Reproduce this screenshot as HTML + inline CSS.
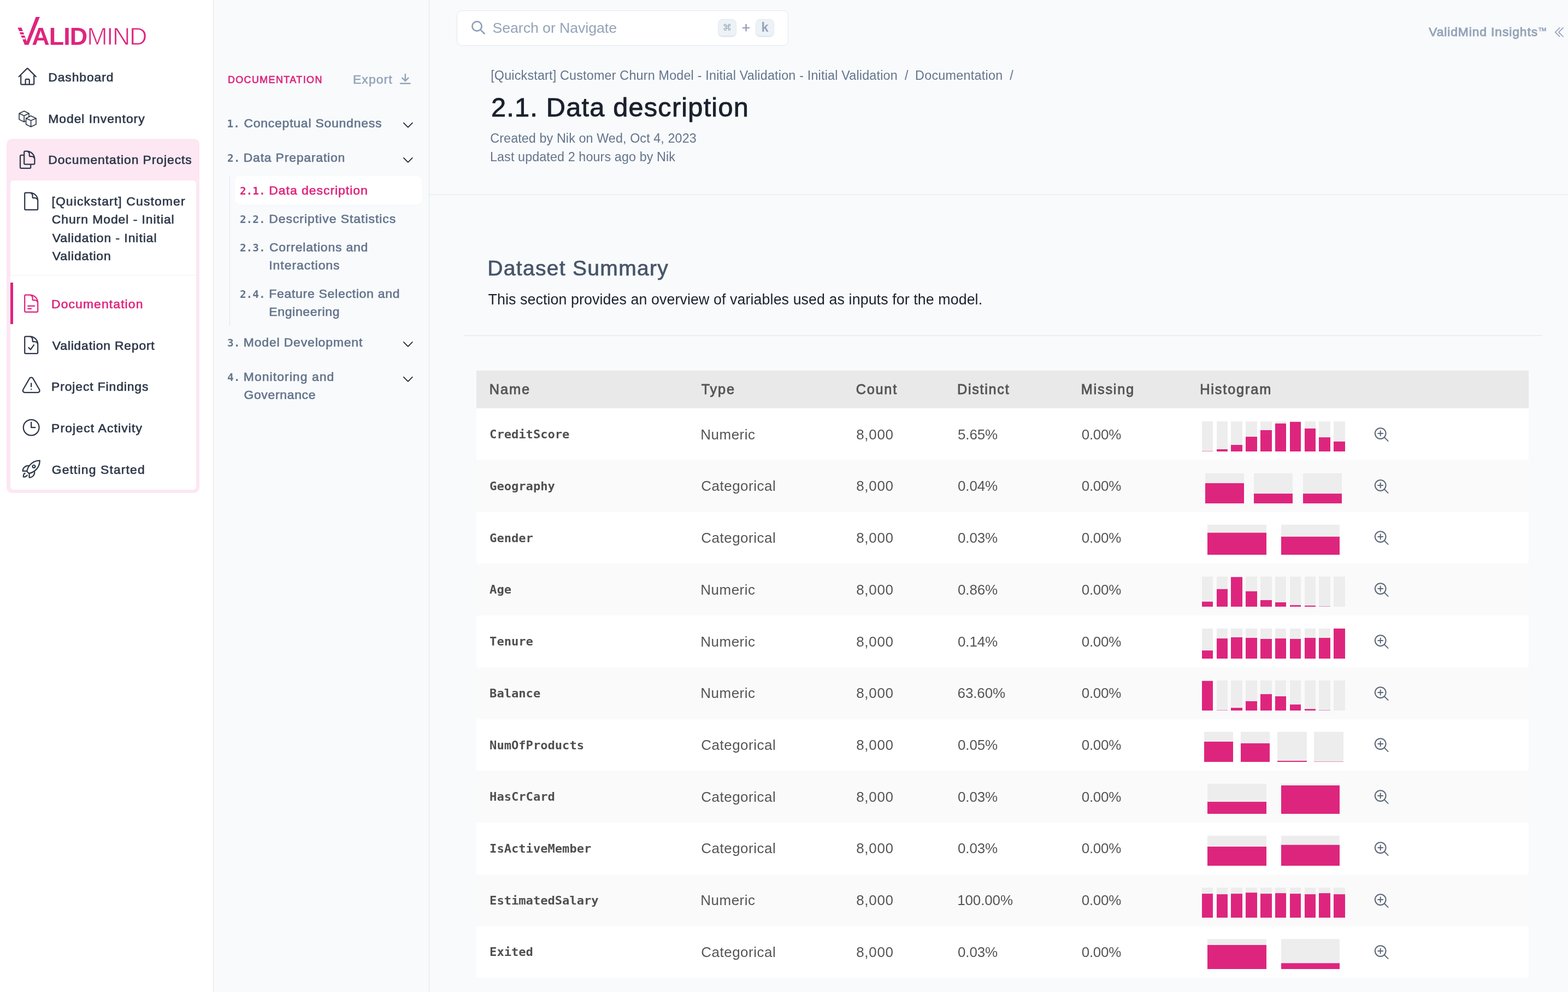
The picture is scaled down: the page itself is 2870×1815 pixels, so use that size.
<!DOCTYPE html>
<html lang="en">
<head>
<meta charset="utf-8">
<title>2.1. Data description - ValidMind</title>
<meta name="viewport" content="width=2870">
<style>
*{box-sizing:border-box;margin:0;padding:0}
html,body{width:2870px;height:1815px;overflow:hidden}
body{position:relative;background:#f8fafc;font-family:"Liberation Sans",sans-serif;color:#2d3748}
ul,ol{list-style:none}
a{color:inherit;text-decoration:none}
h1,h2,p,th,td,code{font-weight:400;font-size:inherit}
.t{position:absolute;white-space:nowrap;display:block}
.ic,.hist{position:absolute;display:block;overflow:visible}
.side1{position:absolute;left:0;top:0;width:391px;height:1815px;background:#fff;border-right:1px solid #e2e8f0}
.side2{position:absolute;left:391px;top:0;width:395px;height:1815px;border-right:1px solid #e2e8f0}
.main{position:absolute;left:786px;top:0;width:2084px;height:1815px}
.side1,.side2,.main{will-change:transform}
.tbl,.tbl thead,.tbl tbody,.tbl th,.tbl td{display:block;position:static}
.pinkbox{position:absolute;left:12px;top:254px;width:353px;height:648px;border-radius:10px;background:#fce7f2}
.card{position:absolute;left:19px;top:329.7px;width:340px;height:566.4px;border-radius:6px;background:#fff}
.cardsep{position:absolute;left:19px;top:503px;width:340px;height:1px;background:#edf2f7}
.bar{position:absolute;left:19px;top:517px;width:5px;height:76px;background:#de257e}
.lv{position:absolute;left:24.3px;top:16.6px;font-size:73.4px;line-height:80px;color:#de257e;clip-path:polygon(0 42.5%,55% 42.5%,55% 0,100% 0,100% 100%,0 100%)}
.ls{position:absolute;left:28px;width:18px;height:2.2px;background:#fff}
.s1{top:56.6px}.s2{top:63px}.s3{top:69.4px}
.rail{position:absolute;top:322px;width:1px;height:274px;background:#dfe5ee}
.act{position:absolute;top:322px;width:342px;height:52px;border-radius:10px;background:#fff}
.search{position:absolute;width:607px;height:65px;border:1px solid #e2e8f0;border-radius:10px;background:#fff}
.kbd{position:absolute;width:34px;height:33px;border-radius:8.5px;background:#edf2f7;border:1px solid #e2e8f0;border-bottom-width:3px;display:flex;align-items:center;justify-content:center;font-family:inherit;color:#94a3b8;line-height:1}
.hr1{position:absolute;left:0;top:355px;width:2084px;height:2px;background:#ecf0f6}
.hr2{position:absolute;top:613px;width:1974px;height:2px;background:#eaedf5}
.tbl tr{position:absolute;display:block;width:1926px;height:95px}
.tbl thead tr{height:69px;background:#e9e9e9}
.tbl tr.odd{background:#fff}
.tbl tr.even{background:#fafafa}
@media (min-resolution:1.5dppx) and (max-width:1500px){html{zoom:.5}}
</style>
</head>
<body>
<nav class="side1" aria-label="Primary">
<a class="logo" aria-label="ValidMind">
<span class="lv">V</span><i class="ls s1"></i><i class="ls s2"></i><i class="ls s3"></i>
<span class="t lg" style="left:58.20px;top:39.00px;font-size:44.9px;line-height:55px;letter-spacing:-0.898px;font-weight:700;color:#de257e;">ALID</span>
<span class="t lg" style="left:159.19px;top:39.00px;font-size:44.9px;line-height:55px;letter-spacing:-1.521px;color:#de257e;-webkit-text-stroke:0.9px #fff;">MIND</span>
</a>
<ul class="nl">
<li><a class="ni"><svg class="ic" style="left:30.80px;top:120.70px;width:38.4px;height:38.4px" viewBox="0 0 24 24" fill="none" stroke="#2d3748" stroke-width="1.4" stroke-linecap="round" stroke-linejoin="round" aria-hidden="true"><path d="m2.25 12 8.954-8.955c.44-.439 1.152-.439 1.591 0L21.75 12M4.5 9.75v10.125c0 .621.504 1.125 1.125 1.125H9.75v-4.875c0-.621.504-1.125 1.125-1.125h2.25c.621 0 1.125.504 1.125 1.125V21h4.125c.621 0 1.125-.504 1.125-1.125V9.75M8.25 21h8.25"/></svg><span class="t" style="left:88.24px;top:126.00px;font-size:22.9px;line-height:30px;letter-spacing:0.900px;color:#2d3748;-webkit-text-stroke:0.65px currentColor;">Dashboard</span></a></li>
<li><a class="ni"><svg class="ic" style="left:25px;top:190px;width:60px;height:55px" viewBox="0 0 60 55" fill="none" stroke="#2d3748" stroke-width="1.65" stroke-linecap="round" stroke-linejoin="round" aria-hidden="true"><path d="M19.15 13.2 10.05 17.5v11.05l9.1 4.35 2.9-1.4M19.15 13.2 28 17.5v6M10.05 17.5l9.1 4.2L28 17.5M19.15 21.7v11.2"/><path d="M31.6 22.05 22.6 26.55v11l9 4.35 9.4-4.35v-11l-9.4-4.5ZM22.6 26.55l9 4 9.4-4M31.6 30.55V41.9"/></svg><span class="t" style="left:88.24px;top:202.00px;font-size:22.9px;line-height:30px;letter-spacing:0.965px;color:#2d3748;-webkit-text-stroke:0.65px currentColor;">Model Inventory</span></a></li>
<li class="grp"><div class="pinkbox"></div><a class="ni"><svg class="ic" style="left:31.20px;top:272.60px;width:38.4px;height:38.4px" viewBox="0 0 24 24" fill="none" stroke="#2d3748" stroke-width="1.4" stroke-linecap="round" stroke-linejoin="round" aria-hidden="true"><path d="M15.75 17.25v3.375c0 .621-.504 1.125-1.125 1.125h-9.75a1.125 1.125 0 0 1-1.125-1.125V7.875c0-.621.504-1.125 1.125-1.125H6.75a9.06 9.06 0 0 1 1.5.124m7.5 10.376h3.375c.621 0 1.125-.504 1.125-1.125V11.25c0-4.46-3.243-8.161-7.5-8.876a9.06 9.06 0 0 0-1.5-.124H9.375c-.621 0-1.125.504-1.125 1.125v3.5m7.5 10.375H9.375a1.125 1.125 0 0 1-1.125-1.125v-9.25m12 6.625v-1.875a3.375 3.375 0 0 0-3.375-3.375h-1.5a1.125 1.125 0 0 1-1.125-1.125v-1.5a3.375 3.375 0 0 0-3.375-3.375H9.75"/></svg><span class="t" style="left:88.24px;top:277.00px;font-size:22.9px;line-height:30px;letter-spacing:0.931px;color:#2d3748;-webkit-text-stroke:0.65px currentColor;">Documentation Projects</span></a>
<div class="card"></div><div class="cardsep"></div><div class="bar"></div>
<ul class="sub">
<li><a class="ni"><svg class="ic" style="left:38.00px;top:348.90px;width:38.4px;height:38.4px" viewBox="0 0 24 24" fill="none" stroke="#2d3748" stroke-width="1.4" stroke-linecap="round" stroke-linejoin="round" aria-hidden="true"><path d="M19.5 14.25v-2.625a3.375 3.375 0 0 0-3.375-3.375h-1.5A1.125 1.125 0 0 1 13.5 7.125v-1.5a3.375 3.375 0 0 0-3.375-3.375H8.25m2.25 0H5.625c-.621 0-1.125.504-1.125 1.125v17.25c0 .621.504 1.125 1.125 1.125h12.75c.621 0 1.125-.504 1.125-1.125V11.25a9 9 0 0 0-9-9Z"/></svg>
<span class="t" style="left:94.39px;top:353.00px;font-size:22.9px;line-height:30px;letter-spacing:1.144px;color:#2d3748;-webkit-text-stroke:0.65px currentColor;">[Quickstart] Customer</span>
<span class="t" style="left:94.75px;top:386.00px;font-size:22.9px;line-height:30px;letter-spacing:0.956px;color:#2d3748;-webkit-text-stroke:0.65px currentColor;">Churn Model - Initial</span>
<span class="t" style="left:95.83px;top:420.00px;font-size:22.9px;line-height:30px;letter-spacing:0.951px;color:#2d3748;-webkit-text-stroke:0.65px currentColor;">Validation - Initial</span>
<span class="t" style="left:95.83px;top:453.00px;font-size:22.9px;line-height:30px;letter-spacing:0.895px;color:#2d3748;-webkit-text-stroke:0.65px currentColor;">Validation</span>
</a></li>
<li><a class="ni on"><svg class="ic" style="left:38.00px;top:535.90px;width:38.4px;height:38.4px" viewBox="0 0 24 24" fill="none" stroke="#de257e" stroke-width="1.4" stroke-linecap="round" stroke-linejoin="round" aria-hidden="true"><path d="M19.5 14.25v-2.625a3.375 3.375 0 0 0-3.375-3.375h-1.5A1.125 1.125 0 0 1 13.5 7.125v-1.5a3.375 3.375 0 0 0-3.375-3.375H8.25m0 12.75h7.5m-7.5 3H12M10.5 2.25H5.625c-.621 0-1.125.504-1.125 1.125v17.25c0 .621.504 1.125 1.125 1.125h12.75c.621 0 1.125-.504 1.125-1.125V11.25a9 9 0 0 0-9-9Z"/></svg><span class="t" style="left:94.04px;top:541.00px;font-size:22.9px;line-height:30px;letter-spacing:1.116px;color:#de257e;-webkit-text-stroke:0.65px currentColor;">Documentation</span></a></li>
<li><a class="ni"><svg class="ic" style="left:38.00px;top:611.50px;width:38.4px;height:38.4px" viewBox="0 0 24 24" fill="none" stroke="#2d3748" stroke-width="1.4" stroke-linecap="round" stroke-linejoin="round" aria-hidden="true"><path d="M10.125 2.25h-4.5c-.621 0-1.125.504-1.125 1.125v17.25c0 .621.504 1.125 1.125 1.125h12.75c.621 0 1.125-.504 1.125-1.125v-9M10.125 2.25h.375a9 9 0 0 1 9 9v.375M10.125 2.25A3.375 3.375 0 0 1 13.5 5.625v1.5c0 .621.504 1.125 1.125 1.125h1.5a3.375 3.375 0 0 1 3.375 3.375M9 15l2.25 2.25L15 12"/></svg><span class="t" style="left:95.83px;top:617.00px;font-size:22.9px;line-height:30px;letter-spacing:0.812px;color:#2d3748;-webkit-text-stroke:0.65px currentColor;">Validation Report</span></a></li>
<li><a class="ni"><svg class="ic" style="left:38.00px;top:687.20px;width:38.4px;height:38.4px" viewBox="0 0 24 24" fill="none" stroke="#2d3748" stroke-width="1.4" stroke-linecap="round" stroke-linejoin="round" aria-hidden="true"><path d="M12 9v3.75m-9.303 3.376c-.866 1.5.217 3.374 1.948 3.374h14.71c1.73 0 2.813-1.874 1.948-3.374L13.949 3.378c-.866-1.5-3.032-1.5-3.898 0L2.697 16.126ZM12 15.75h.007v.008H12v-.008Z"/></svg><span class="t" style="left:94.04px;top:692.00px;font-size:22.9px;line-height:30px;letter-spacing:0.884px;color:#2d3748;-webkit-text-stroke:0.65px currentColor;">Project Findings</span></a></li>
<li><a class="ni"><svg class="ic" style="left:38.00px;top:763.10px;width:38.4px;height:38.4px" viewBox="0 0 24 24" fill="none" stroke="#2d3748" stroke-width="1.4" stroke-linecap="round" stroke-linejoin="round" aria-hidden="true"><path d="M12 6v6h4.5m4.5 0a9 9 0 1 1-18 0 9 9 0 0 1 18 0Z"/></svg><span class="t" style="left:94.04px;top:768.00px;font-size:22.9px;line-height:30px;letter-spacing:1.139px;color:#2d3748;-webkit-text-stroke:0.65px currentColor;">Project Activity</span></a></li>
<li><a class="ni"><svg class="ic" style="left:38.00px;top:839.00px;width:38.4px;height:38.4px" viewBox="0 0 24 24" fill="none" stroke="#2d3748" stroke-width="1.4" stroke-linecap="round" stroke-linejoin="round" aria-hidden="true"><path d="M15.59 14.37a6 6 0 0 1-5.84 7.38v-4.8m5.84-2.58a14.98 14.98 0 0 0 6.16-12.12A14.98 14.98 0 0 0 9.631 8.41m5.96 5.96a14.926 14.926 0 0 1-5.841 2.58m-.119-8.54a6 6 0 0 0-7.381 5.84h4.8m2.581-5.84a14.927 14.927 0 0 0-2.58 5.84m2.699 2.7c-.103.021-.207.041-.311.06a15.09 15.09 0 0 1-2.448-2.448 14.9 14.9 0 0 1 .06-.312m-2.24 2.39a4.493 4.493 0 0 0-1.757 4.306 4.493 4.493 0 0 0 4.306-1.758M16.5 9a1.5 1.5 0 1 1-3 0 1.5 1.5 0 0 1 3 0Z"/></svg><span class="t" style="left:94.75px;top:844.00px;font-size:22.9px;line-height:30px;letter-spacing:1.142px;color:#2d3748;-webkit-text-stroke:0.65px currentColor;">Getting Started</span></a></li>
</ul></li></ul>
</nav>
<aside class="side2" aria-label="Documentation outline">
<h2 class="t" style="left:25.95px;top:134.00px;font-size:17.9px;line-height:24px;letter-spacing:1.417px;color:#de257e;-webkit-text-stroke:0.7px currentColor;">DOCUMENTATION</h2>
<a class="exp"><span class="t" style="left:255.01px;top:130.00px;font-size:22.9px;line-height:30px;letter-spacing:1.085px;color:#94a3b8;-webkit-text-stroke:0.6px currentColor;">Export</span><svg class="ic" style="left:338.20px;top:132.40px;width:25.6px;height:25.6px" viewBox="0 0 24 24" fill="none" stroke="#94a3b8" stroke-width="2.3" stroke-linecap="round" stroke-linejoin="round" aria-hidden="true"><path d="M12 3.6v11.5m-5.2-5.2 5.2 5.2 5.2-5.2M3.8 19.5h16.4"/></svg></a>
<ol class="toc">
<li><span class="t" style="left:24.48px;top:213.00px;font-size:19.4px;line-height:27px;font-weight:700;font-family:'DejaVu Sans Mono', 'Liberation Mono', monospace;color:#64748b;">1.</span><span class="t" style="left:55.45px;top:210.00px;font-size:22.9px;line-height:30px;letter-spacing:0.802px;color:#64748b;-webkit-text-stroke:0.65px currentColor;">Conceptual Soundness</span><svg class="ic" style="left:343.00px;top:215.80px;width:25.6px;height:25.6px" viewBox="0 0 24 24" fill="none" stroke="#1a202c" stroke-width="1.6" stroke-linecap="round" stroke-linejoin="round" aria-hidden="true"><path d="m19.5 8.25-7.5 7.5-7.5-7.5"/></svg></li>
<li><span class="t" style="left:25.09px;top:276.00px;font-size:19.4px;line-height:27px;font-weight:700;font-family:'DejaVu Sans Mono', 'Liberation Mono', monospace;color:#64748b;">2.</span><span class="t" style="left:54.74px;top:273.00px;font-size:22.9px;line-height:30px;letter-spacing:0.833px;color:#64748b;-webkit-text-stroke:0.65px currentColor;">Data Preparation</span><svg class="ic" style="left:343.00px;top:280.00px;width:25.6px;height:25.6px" viewBox="0 0 24 24" fill="none" stroke="#1a202c" stroke-width="1.6" stroke-linecap="round" stroke-linejoin="round" aria-hidden="true"><path d="m19.5 8.25-7.5 7.5-7.5-7.5"/></svg>
<div class="rail" style="left:29.0px"></div><div class="act" style="left:39.0px"></div><ol>
<li><span class="t" style="left:47.89px;top:336.00px;font-size:19.4px;line-height:27px;font-weight:700;font-family:'DejaVu Sans Mono', 'Liberation Mono', monospace;color:#de257e;">2.1.</span><span class="t" style="left:101.24px;top:333.00px;font-size:22.9px;line-height:30px;letter-spacing:1.010px;color:#de257e;-webkit-text-stroke:0.65px currentColor;">Data description</span></li>
<li><span class="t" style="left:47.89px;top:388.00px;font-size:19.4px;line-height:27px;font-weight:700;font-family:'DejaVu Sans Mono', 'Liberation Mono', monospace;color:#64748b;">2.2.</span><span class="t" style="left:101.24px;top:385.00px;font-size:22.9px;line-height:30px;letter-spacing:0.991px;color:#64748b;-webkit-text-stroke:0.65px currentColor;">Descriptive Statistics</span></li>
<li><span class="t" style="left:47.89px;top:440.00px;font-size:19.4px;line-height:27px;font-weight:700;font-family:'DejaVu Sans Mono', 'Liberation Mono', monospace;color:#64748b;">2.3.</span><span class="t" style="left:101.95px;top:437.00px;font-size:22.9px;line-height:30px;letter-spacing:0.826px;color:#64748b;-webkit-text-stroke:0.65px currentColor;">Correlations and</span><span class="t" style="left:101.24px;top:470.00px;font-size:22.9px;line-height:30px;letter-spacing:0.998px;color:#64748b;-webkit-text-stroke:0.65px currentColor;">Interactions</span></li>
<li><span class="t" style="left:47.89px;top:525.00px;font-size:19.4px;line-height:27px;font-weight:700;font-family:'DejaVu Sans Mono', 'Liberation Mono', monospace;color:#64748b;">2.4.</span><span class="t" style="left:101.24px;top:522.00px;font-size:22.9px;line-height:30px;letter-spacing:0.758px;color:#64748b;-webkit-text-stroke:0.65px currentColor;">Feature Selection and</span><span class="t" style="left:101.24px;top:555.00px;font-size:22.9px;line-height:30px;letter-spacing:0.710px;color:#64748b;-webkit-text-stroke:0.65px currentColor;">Engineering</span></li>
</ol></li>
<li><span class="t" style="left:25.09px;top:614.00px;font-size:19.4px;line-height:27px;font-weight:700;font-family:'DejaVu Sans Mono', 'Liberation Mono', monospace;color:#64748b;">3.</span><span class="t" style="left:54.74px;top:611.00px;font-size:22.9px;line-height:30px;letter-spacing:0.875px;color:#64748b;-webkit-text-stroke:0.65px currentColor;">Model Development</span><svg class="ic" style="left:343.00px;top:616.90px;width:25.6px;height:25.6px" viewBox="0 0 24 24" fill="none" stroke="#1a202c" stroke-width="1.6" stroke-linecap="round" stroke-linejoin="round" aria-hidden="true"><path d="m19.5 8.25-7.5 7.5-7.5-7.5"/></svg></li>
<li><span class="t" style="left:25.09px;top:677.00px;font-size:19.4px;line-height:27px;font-weight:700;font-family:'DejaVu Sans Mono', 'Liberation Mono', monospace;color:#64748b;">4.</span><span class="t" style="left:54.74px;top:674.00px;font-size:22.9px;line-height:30px;letter-spacing:1.087px;color:#64748b;-webkit-text-stroke:0.65px currentColor;">Monitoring and</span><span class="t" style="left:55.45px;top:707.00px;font-size:22.9px;line-height:30px;letter-spacing:0.700px;color:#64748b;-webkit-text-stroke:0.65px currentColor;">Governance</span><svg class="ic" style="left:343.00px;top:681.00px;width:25.6px;height:25.6px" viewBox="0 0 24 24" fill="none" stroke="#1a202c" stroke-width="1.6" stroke-linecap="round" stroke-linejoin="round" aria-hidden="true"><path d="m19.5 8.25-7.5 7.5-7.5-7.5"/></svg></li>
</ol>
</aside>
<main class="main">
<header class="top">
<div class="search" role="search" style="left:50.0px;top:19.0px">
<svg class="ic" style="left:23.0px;top:15.0px;width:32px;height:32px" viewBox="0 0 32 32" fill="none" stroke="#8f9fb8" stroke-width="2.7" stroke-linecap="butt" aria-hidden="true"><circle cx="13" cy="13" r="8.65"/><path d="M19.1 19.1 27.3 27.3"/></svg>
<span class="t" style="left:64.57px;top:14.00px;font-size:26.7px;line-height:34px;letter-spacing:-0.061px;color:#94a3b8;">Search or Navigate</span>
<kbd class="kbd" style="left:477.0px;top:15.0px"><span style="font-family:'DejaVu Sans', sans-serif;font-size:16.5px;position:relative;top:1px">⌘</span></kbd>
<span class="t" style="left:520.98px;top:13.00px;font-size:26px;line-height:34px;color:#94a3b8;-webkit-text-stroke:0.6px currentColor;">+</span>
<kbd class="kbd" style="left:546.0px;top:15.0px"><span style="font-weight:700;font-size:23.5px;position:relative;top:0.5px">k</span></kbd>
</div>
<div class="ins"><span class="t" style="left:1829.25px;top:43.00px;font-size:22.8px;line-height:30px;letter-spacing:0.910px;color:#94a3b8;-webkit-text-stroke:0.9px currentColor;">ValidMind Insights</span><span class="t" style="left:2028.56px;top:45.00px;font-size:16.5px;line-height:22px;color:#94a3b8;-webkit-text-stroke:0.5px currentColor;">™</span><svg class="ic" style="left:2055.20px;top:45.60px;width:25.6px;height:25.6px" viewBox="0 0 24 24" fill="none" stroke="#94a3b8" stroke-width="1.6" stroke-linecap="round" stroke-linejoin="round" aria-hidden="true"><path d="m18.75 4.5-7.5 7.5 7.5 7.5m-6-15L5.25 12l7.5 7.5"/></svg></div>
</header>
<section class="hd">
<nav class="crumbs" aria-label="Breadcrumb">
<span class="t" style="left:112.14px;top:123.00px;font-size:23.3px;line-height:30px;letter-spacing:0.205px;color:#64748b;">[Quickstart] Customer Churn Model - Initial Validation - Initial Validation</span>
<span class="t" style="left:870.10px;top:123.00px;font-size:23.3px;line-height:30px;color:#64748b;">/</span>
<span class="t" style="left:889.08px;top:123.00px;font-size:23.3px;line-height:30px;letter-spacing:0.284px;color:#64748b;">Documentation</span>
<span class="t" style="left:1062.30px;top:123.00px;font-size:23.3px;line-height:30px;color:#64748b;">/</span>
</nav>
<h1 class="t" style="left:112.97px;top:167.00px;font-size:48.7px;line-height:58px;letter-spacing:1.212px;color:#1a202c;-webkit-text-stroke:0.9px currentColor;">2.1. Data description</h1>
<p class="t" style="left:111.31px;top:238.00px;font-size:23.3px;line-height:30px;letter-spacing:0.108px;color:#64748b;">Created by Nik on Wed, Oct 4, 2023</p>
<p class="t" style="left:110.98px;top:272.00px;font-size:23.3px;line-height:30px;letter-spacing:0.119px;color:#64748b;">Last updated 2 hours ago by Nik</p>
</section>
<div class="hr1"></div>
<section class="content">
<h2 class="t" style="left:106.30px;top:467.00px;font-size:39px;line-height:47px;letter-spacing:1.311px;color:#475569;-webkit-text-stroke:0.7px currentColor;">Dataset Summary</h2>
<p class="t" style="left:107.58px;top:531.00px;font-size:26.8px;line-height:34px;letter-spacing:0.085px;color:#1a202c;">This section provides an overview of variables used as inputs for the model.</p>
<div class="hr2" style="left:62.0px"></div>
<table class="tbl"><thead><tr style="left:86.0px;top:678.0px">
<th><span class="t" style="left:23.85px;top:18.00px;font-size:25.3px;line-height:32px;letter-spacing:1.888px;color:#555;-webkit-text-stroke:0.85px currentColor;">Name</span></th>
<th><span class="t" style="left:411.63px;top:18.00px;font-size:25.3px;line-height:32px;letter-spacing:1.840px;color:#555;-webkit-text-stroke:0.85px currentColor;">Type</span></th>
<th><span class="t" style="left:694.84px;top:18.00px;font-size:25.3px;line-height:32px;letter-spacing:1.709px;color:#555;-webkit-text-stroke:0.85px currentColor;">Count</span></th>
<th><span class="t" style="left:880.05px;top:18.00px;font-size:25.3px;line-height:32px;letter-spacing:1.671px;color:#555;-webkit-text-stroke:0.85px currentColor;">Distinct</span></th>
<th><span class="t" style="left:1106.75px;top:18.00px;font-size:25.3px;line-height:32px;letter-spacing:1.782px;color:#555;-webkit-text-stroke:0.85px currentColor;">Missing</span></th>
<th><span class="t" style="left:1324.15px;top:18.00px;font-size:25.3px;line-height:32px;letter-spacing:1.857px;color:#555;-webkit-text-stroke:0.85px currentColor;">Histogram</span></th>
<th></th></tr></thead><tbody>
<tr class="odd" style="left:86.0px;top:747px;height:95px">
<td><code class="t" style="left:24.10px;top:32.00px;font-size:22.1px;line-height:30px;font-weight:700;font-family:'DejaVu Sans Mono', 'Liberation Mono', monospace;color:#4f4f4f;transform:scaleY(0.96);transform-origin:0 23.0px;">CreditScore</code></td>
<td><span class="t" style="left:410.37px;top:31.00px;font-size:26.0px;line-height:34px;letter-spacing:0.458px;color:#555;">Numeric</span></td>
<td><span class="t" style="left:695.19px;top:31.00px;font-size:26.0px;line-height:34px;letter-spacing:0.699px;color:#555;">8,000</span></td>
<td><span class="t" style="left:880.99px;top:31.00px;font-size:26.0px;line-height:34px;letter-spacing:-0.120px;color:#555;">5.65%</span></td>
<td><span class="t" style="left:1107.69px;top:31.00px;font-size:26.0px;line-height:34px;letter-spacing:-0.259px;color:#555;">0.00%</span></td>
<td><svg class="hist" style="left:1318.0px;top:24.0px" width="280" height="55" viewBox="2190 0 280 55" aria-hidden="true"><rect x="2200.0" y="0" width="20.0" height="55" fill="#ededed"/><rect x="2200.0" y="54.00" width="20.0" height="1.00" fill="#de257e" opacity="0.45"/><rect x="2227.0" y="0" width="20.0" height="55" fill="#ededed"/><rect x="2227.0" y="50.98" width="20.0" height="4.01" fill="#de257e"/><rect x="2253.0" y="0" width="21.0" height="55" fill="#ededed"/><rect x="2253.0" y="43.01" width="21.0" height="11.99" fill="#de257e"/><rect x="2280.0" y="0" width="21.0" height="55" fill="#ededed"/><rect x="2280.0" y="28.05" width="21.0" height="26.95" fill="#de257e"/><rect x="2307.0" y="0" width="21.0" height="55" fill="#ededed"/><rect x="2307.0" y="16.01" width="21.0" height="38.99" fill="#de257e"/><rect x="2334.0" y="0" width="20.0" height="55" fill="#ededed"/><rect x="2334.0" y="3.85" width="20.0" height="51.15" fill="#de257e"/><rect x="2361.0" y="0" width="20.0" height="55" fill="#ededed"/><rect x="2361.0" y="0.83" width="20.0" height="54.17" fill="#de257e"/><rect x="2388.0" y="0" width="20.0" height="55" fill="#ededed"/><rect x="2388.0" y="12.98" width="20.0" height="42.02" fill="#de257e"/><rect x="2414.0" y="0" width="21.0" height="55" fill="#ededed"/><rect x="2414.0" y="29.15" width="21.0" height="25.85" fill="#de257e"/><rect x="2441.0" y="0" width="21.0" height="55" fill="#ededed"/><rect x="2441.0" y="36.85" width="21.0" height="18.15" fill="#de257e"/></svg></td>
<td><svg class="ic" style="left:1640.0px;top:31.2px;width:32px;height:32px" viewBox="0 0 32 32" fill="none" stroke="#5d6878" stroke-width="2.05" stroke-linecap="round" aria-hidden="true"><circle cx="14.7" cy="15" r="9.85"/><path d="M21.8 22.1 28.6 28.9M10.2 15h9M14.7 10.5v9"/></svg></td>
</tr>
<tr class="even" style="left:86.0px;top:842px;height:95px">
<td><code class="t" style="left:24.10px;top:32.00px;font-size:22.1px;line-height:30px;font-weight:700;font-family:'DejaVu Sans Mono', 'Liberation Mono', monospace;color:#4f4f4f;transform:scaleY(0.96);transform-origin:0 23.0px;">Geography</code></td>
<td><span class="t" style="left:411.18px;top:30.00px;font-size:26.0px;line-height:34px;letter-spacing:0.512px;color:#555;">Categorical</span></td>
<td><span class="t" style="left:695.19px;top:30.00px;font-size:26.0px;line-height:34px;letter-spacing:0.699px;color:#555;">8,000</span></td>
<td><span class="t" style="left:880.99px;top:30.00px;font-size:26.0px;line-height:34px;letter-spacing:-0.120px;color:#555;">0.04%</span></td>
<td><span class="t" style="left:1107.69px;top:30.00px;font-size:26.0px;line-height:34px;letter-spacing:-0.259px;color:#555;">0.00%</span></td>
<td><svg class="hist" style="left:1318.0px;top:24.0px" width="280" height="55" viewBox="2190 0 280 55" aria-hidden="true"><rect x="2206.0" y="0" width="71.0" height="55" fill="#ededed"/><rect x="2206.0" y="18.04" width="71.0" height="36.96" fill="#de257e"/><rect x="2295.0" y="0" width="71.0" height="55" fill="#ededed"/><rect x="2295.0" y="37.12" width="71.0" height="17.88" fill="#de257e"/><rect x="2385.0" y="0" width="71.0" height="55" fill="#ededed"/><rect x="2385.0" y="37.12" width="71.0" height="17.88" fill="#de257e"/></svg></td>
<td><svg class="ic" style="left:1640.0px;top:31.2px;width:32px;height:32px" viewBox="0 0 32 32" fill="none" stroke="#5d6878" stroke-width="2.05" stroke-linecap="round" aria-hidden="true"><circle cx="14.7" cy="15" r="9.85"/><path d="M21.8 22.1 28.6 28.9M10.2 15h9M14.7 10.5v9"/></svg></td>
</tr>
<tr class="odd" style="left:86.0px;top:937px;height:94px">
<td><code class="t" style="left:24.10px;top:32.00px;font-size:22.1px;line-height:30px;font-weight:700;font-family:'DejaVu Sans Mono', 'Liberation Mono', monospace;color:#4f4f4f;transform:scaleY(0.96);transform-origin:0 23.0px;">Gender</code></td>
<td><span class="t" style="left:411.18px;top:30.00px;font-size:26.0px;line-height:34px;letter-spacing:0.512px;color:#555;">Categorical</span></td>
<td><span class="t" style="left:695.19px;top:30.00px;font-size:26.0px;line-height:34px;letter-spacing:0.699px;color:#555;">8,000</span></td>
<td><span class="t" style="left:880.99px;top:30.00px;font-size:26.0px;line-height:34px;letter-spacing:-0.120px;color:#555;">0.03%</span></td>
<td><span class="t" style="left:1107.69px;top:30.00px;font-size:26.0px;line-height:34px;letter-spacing:-0.259px;color:#555;">0.00%</span></td>
<td><svg class="hist" style="left:1318.0px;top:23.0px" width="280" height="55" viewBox="2190 0 280 55" aria-hidden="true"><rect x="2210.0" y="0" width="108.0" height="55" fill="#ededed"/><rect x="2210.0" y="14.69" width="108.0" height="40.31" fill="#de257e"/><rect x="2345.0" y="0" width="107.0" height="55" fill="#ededed"/><rect x="2345.0" y="21.89" width="107.0" height="33.11" fill="#de257e"/></svg></td>
<td><svg class="ic" style="left:1640.0px;top:30.2px;width:32px;height:32px" viewBox="0 0 32 32" fill="none" stroke="#5d6878" stroke-width="2.05" stroke-linecap="round" aria-hidden="true"><circle cx="14.7" cy="15" r="9.85"/><path d="M21.8 22.1 28.6 28.9M10.2 15h9M14.7 10.5v9"/></svg></td>
</tr>
<tr class="even" style="left:86.0px;top:1031px;height:95px">
<td><code class="t" style="left:24.10px;top:32.00px;font-size:22.1px;line-height:30px;font-weight:700;font-family:'DejaVu Sans Mono', 'Liberation Mono', monospace;color:#4f4f4f;transform:scaleY(0.96);transform-origin:0 23.0px;">Age</code></td>
<td><span class="t" style="left:410.37px;top:31.00px;font-size:26.0px;line-height:34px;letter-spacing:0.458px;color:#555;">Numeric</span></td>
<td><span class="t" style="left:695.19px;top:31.00px;font-size:26.0px;line-height:34px;letter-spacing:0.699px;color:#555;">8,000</span></td>
<td><span class="t" style="left:880.99px;top:31.00px;font-size:26.0px;line-height:34px;letter-spacing:-0.120px;color:#555;">0.86%</span></td>
<td><span class="t" style="left:1107.69px;top:31.00px;font-size:26.0px;line-height:34px;letter-spacing:-0.259px;color:#555;">0.00%</span></td>
<td><svg class="hist" style="left:1318.0px;top:24.0px" width="280" height="55" viewBox="2190 0 280 55" aria-hidden="true"><rect x="2200.0" y="0" width="20.0" height="55" fill="#ededed"/><rect x="2200.0" y="45.81" width="20.0" height="9.19" fill="#de257e"/><rect x="2227.0" y="0" width="20.0" height="55" fill="#ededed"/><rect x="2227.0" y="22.83" width="20.0" height="32.17" fill="#de257e"/><rect x="2253.0" y="0" width="21.0" height="55" fill="#ededed"/><rect x="2253.0" y="0.83" width="21.0" height="54.17" fill="#de257e"/><rect x="2280.0" y="0" width="21.0" height="55" fill="#ededed"/><rect x="2280.0" y="26.84" width="21.0" height="28.16" fill="#de257e"/><rect x="2307.0" y="0" width="21.0" height="55" fill="#ededed"/><rect x="2307.0" y="43.01" width="21.0" height="11.99" fill="#de257e"/><rect x="2334.0" y="0" width="20.0" height="55" fill="#ededed"/><rect x="2334.0" y="47.02" width="20.0" height="7.97" fill="#de257e"/><rect x="2361.0" y="0" width="20.0" height="55" fill="#ededed"/><rect x="2361.0" y="52.25" width="20.0" height="2.75" fill="#de257e"/><rect x="2388.0" y="0" width="20.0" height="55" fill="#ededed"/><rect x="2388.0" y="53.02" width="20.0" height="1.98" fill="#de257e"/><rect x="2414.0" y="0" width="21.0" height="55" fill="#ededed"/><rect x="2414.0" y="54.00" width="21.0" height="1.00" fill="#de257e" opacity="0.45"/><rect x="2441.0" y="0" width="21.0" height="55" fill="#ededed"/></svg></td>
<td><svg class="ic" style="left:1640.0px;top:31.2px;width:32px;height:32px" viewBox="0 0 32 32" fill="none" stroke="#5d6878" stroke-width="2.05" stroke-linecap="round" aria-hidden="true"><circle cx="14.7" cy="15" r="9.85"/><path d="M21.8 22.1 28.6 28.9M10.2 15h9M14.7 10.5v9"/></svg></td>
</tr>
<tr class="odd" style="left:86.0px;top:1126px;height:95px">
<td><code class="t" style="left:24.10px;top:32.00px;font-size:22.1px;line-height:30px;font-weight:700;font-family:'DejaVu Sans Mono', 'Liberation Mono', monospace;color:#4f4f4f;transform:scaleY(0.96);transform-origin:0 23.0px;">Tenure</code></td>
<td><span class="t" style="left:410.37px;top:31.00px;font-size:26.0px;line-height:34px;letter-spacing:0.458px;color:#555;">Numeric</span></td>
<td><span class="t" style="left:695.19px;top:31.00px;font-size:26.0px;line-height:34px;letter-spacing:0.699px;color:#555;">8,000</span></td>
<td><span class="t" style="left:880.99px;top:31.00px;font-size:26.0px;line-height:34px;letter-spacing:-0.120px;color:#555;">0.14%</span></td>
<td><span class="t" style="left:1107.69px;top:31.00px;font-size:26.0px;line-height:34px;letter-spacing:-0.259px;color:#555;">0.00%</span></td>
<td><svg class="hist" style="left:1318.0px;top:24.0px" width="280" height="55" viewBox="2190 0 280 55" aria-hidden="true"><rect x="2200.0" y="0" width="20.0" height="55" fill="#ededed"/><rect x="2200.0" y="40.15" width="20.0" height="14.85" fill="#de257e"/><rect x="2227.0" y="0" width="20.0" height="55" fill="#ededed"/><rect x="2227.0" y="18.15" width="20.0" height="36.85" fill="#de257e"/><rect x="2253.0" y="0" width="21.0" height="55" fill="#ededed"/><rect x="2253.0" y="16.01" width="21.0" height="38.99" fill="#de257e"/><rect x="2280.0" y="0" width="21.0" height="55" fill="#ededed"/><rect x="2280.0" y="17.05" width="21.0" height="37.95" fill="#de257e"/><rect x="2307.0" y="0" width="21.0" height="55" fill="#ededed"/><rect x="2307.0" y="18.98" width="21.0" height="36.02" fill="#de257e"/><rect x="2334.0" y="0" width="20.0" height="55" fill="#ededed"/><rect x="2334.0" y="18.15" width="20.0" height="36.85" fill="#de257e"/><rect x="2361.0" y="0" width="20.0" height="55" fill="#ededed"/><rect x="2361.0" y="18.98" width="20.0" height="36.02" fill="#de257e"/><rect x="2388.0" y="0" width="20.0" height="55" fill="#ededed"/><rect x="2388.0" y="17.05" width="20.0" height="37.95" fill="#de257e"/><rect x="2414.0" y="0" width="21.0" height="55" fill="#ededed"/><rect x="2414.0" y="17.05" width="21.0" height="37.95" fill="#de257e"/><rect x="2441.0" y="0" width="21.0" height="55" fill="#ededed"/><rect x="2441.0" y="0.00" width="21.0" height="55.00" fill="#de257e"/></svg></td>
<td><svg class="ic" style="left:1640.0px;top:31.2px;width:32px;height:32px" viewBox="0 0 32 32" fill="none" stroke="#5d6878" stroke-width="2.05" stroke-linecap="round" aria-hidden="true"><circle cx="14.7" cy="15" r="9.85"/><path d="M21.8 22.1 28.6 28.9M10.2 15h9M14.7 10.5v9"/></svg></td>
</tr>
<tr class="even" style="left:86.0px;top:1221px;height:95px">
<td><code class="t" style="left:24.10px;top:32.00px;font-size:22.1px;line-height:30px;font-weight:700;font-family:'DejaVu Sans Mono', 'Liberation Mono', monospace;color:#4f4f4f;transform:scaleY(0.96);transform-origin:0 23.0px;">Balance</code></td>
<td><span class="t" style="left:410.37px;top:30.00px;font-size:26.0px;line-height:34px;letter-spacing:0.458px;color:#555;">Numeric</span></td>
<td><span class="t" style="left:695.19px;top:30.00px;font-size:26.0px;line-height:34px;letter-spacing:0.699px;color:#555;">8,000</span></td>
<td><span class="t" style="left:880.58px;top:30.00px;font-size:26.0px;line-height:34px;letter-spacing:-0.120px;color:#555;">63.60%</span></td>
<td><span class="t" style="left:1107.69px;top:30.00px;font-size:26.0px;line-height:34px;letter-spacing:-0.259px;color:#555;">0.00%</span></td>
<td><svg class="hist" style="left:1318.0px;top:24.0px" width="280" height="55" viewBox="2190 0 280 55" aria-hidden="true"><rect x="2200.0" y="0" width="20.0" height="55" fill="#ededed"/><rect x="2200.0" y="0.83" width="20.0" height="54.17" fill="#de257e"/><rect x="2227.0" y="0" width="20.0" height="55" fill="#ededed"/><rect x="2227.0" y="54.00" width="20.0" height="1.00" fill="#de257e" opacity="0.45"/><rect x="2253.0" y="0" width="21.0" height="55" fill="#ededed"/><rect x="2253.0" y="50.05" width="21.0" height="4.95" fill="#de257e"/><rect x="2280.0" y="0" width="21.0" height="55" fill="#ededed"/><rect x="2280.0" y="37.95" width="21.0" height="17.05" fill="#de257e"/><rect x="2307.0" y="0" width="21.0" height="55" fill="#ededed"/><rect x="2307.0" y="25.02" width="21.0" height="29.98" fill="#de257e"/><rect x="2334.0" y="0" width="20.0" height="55" fill="#ededed"/><rect x="2334.0" y="28.99" width="20.0" height="26.01" fill="#de257e"/><rect x="2361.0" y="0" width="20.0" height="55" fill="#ededed"/><rect x="2361.0" y="44.00" width="20.0" height="11.00" fill="#de257e"/><rect x="2388.0" y="0" width="20.0" height="55" fill="#ededed"/><rect x="2388.0" y="52.25" width="20.0" height="2.75" fill="#de257e"/><rect x="2414.0" y="0" width="21.0" height="55" fill="#ededed"/><rect x="2414.0" y="54.00" width="21.0" height="1.00" fill="#de257e" opacity="0.45"/><rect x="2441.0" y="0" width="21.0" height="55" fill="#ededed"/></svg></td>
<td><svg class="ic" style="left:1640.0px;top:31.2px;width:32px;height:32px" viewBox="0 0 32 32" fill="none" stroke="#5d6878" stroke-width="2.05" stroke-linecap="round" aria-hidden="true"><circle cx="14.7" cy="15" r="9.85"/><path d="M21.8 22.1 28.6 28.9M10.2 15h9M14.7 10.5v9"/></svg></td>
</tr>
<tr class="odd" style="left:86.0px;top:1316px;height:94px">
<td><code class="t" style="left:24.10px;top:32.00px;font-size:22.1px;line-height:30px;font-weight:700;font-family:'DejaVu Sans Mono', 'Liberation Mono', monospace;color:#4f4f4f;transform:scaleY(0.96);transform-origin:0 23.0px;">NumOfProducts</code></td>
<td><span class="t" style="left:411.18px;top:30.00px;font-size:26.0px;line-height:34px;letter-spacing:0.512px;color:#555;">Categorical</span></td>
<td><span class="t" style="left:695.19px;top:30.00px;font-size:26.0px;line-height:34px;letter-spacing:0.699px;color:#555;">8,000</span></td>
<td><span class="t" style="left:880.99px;top:30.00px;font-size:26.0px;line-height:34px;letter-spacing:-0.120px;color:#555;">0.05%</span></td>
<td><span class="t" style="left:1107.69px;top:30.00px;font-size:26.0px;line-height:34px;letter-spacing:-0.259px;color:#555;">0.00%</span></td>
<td><svg class="hist" style="left:1318.0px;top:23.0px" width="280" height="55" viewBox="2190 0 280 55" aria-hidden="true"><rect x="2204.0" y="0" width="53.0" height="55" fill="#ededed"/><rect x="2204.0" y="17.98" width="53.0" height="37.02" fill="#de257e"/><rect x="2271.0" y="0" width="53.0" height="55" fill="#ededed"/><rect x="2271.0" y="21.01" width="53.0" height="33.99" fill="#de257e"/><rect x="2338.0" y="0" width="54.0" height="55" fill="#ededed"/><rect x="2338.0" y="53.02" width="54.0" height="1.98" fill="#de257e"/><rect x="2405.0" y="0" width="54.0" height="55" fill="#ededed"/><rect x="2405.0" y="54.00" width="54.0" height="1.00" fill="#de257e" opacity="0.45"/></svg></td>
<td><svg class="ic" style="left:1640.0px;top:30.2px;width:32px;height:32px" viewBox="0 0 32 32" fill="none" stroke="#5d6878" stroke-width="2.05" stroke-linecap="round" aria-hidden="true"><circle cx="14.7" cy="15" r="9.85"/><path d="M21.8 22.1 28.6 28.9M10.2 15h9M14.7 10.5v9"/></svg></td>
</tr>
<tr class="even" style="left:86.0px;top:1410px;height:95px">
<td><code class="t" style="left:24.10px;top:32.00px;font-size:22.1px;line-height:30px;font-weight:700;font-family:'DejaVu Sans Mono', 'Liberation Mono', monospace;color:#4f4f4f;transform:scaleY(0.96);transform-origin:0 23.0px;">HasCrCard</code></td>
<td><span class="t" style="left:411.18px;top:31.00px;font-size:26.0px;line-height:34px;letter-spacing:0.512px;color:#555;">Categorical</span></td>
<td><span class="t" style="left:695.19px;top:31.00px;font-size:26.0px;line-height:34px;letter-spacing:0.699px;color:#555;">8,000</span></td>
<td><span class="t" style="left:880.99px;top:31.00px;font-size:26.0px;line-height:34px;letter-spacing:-0.120px;color:#555;">0.03%</span></td>
<td><span class="t" style="left:1107.69px;top:31.00px;font-size:26.0px;line-height:34px;letter-spacing:-0.259px;color:#555;">0.00%</span></td>
<td><svg class="hist" style="left:1318.0px;top:24.0px" width="280" height="55" viewBox="2190 0 280 55" aria-hidden="true"><rect x="2210.0" y="0" width="108.0" height="55" fill="#ededed"/><rect x="2210.0" y="33.00" width="108.0" height="22.00" fill="#de257e"/><rect x="2345.0" y="0" width="107.0" height="55" fill="#ededed"/><rect x="2345.0" y="3.03" width="107.0" height="51.97" fill="#de257e"/></svg></td>
<td><svg class="ic" style="left:1640.0px;top:31.2px;width:32px;height:32px" viewBox="0 0 32 32" fill="none" stroke="#5d6878" stroke-width="2.05" stroke-linecap="round" aria-hidden="true"><circle cx="14.7" cy="15" r="9.85"/><path d="M21.8 22.1 28.6 28.9M10.2 15h9M14.7 10.5v9"/></svg></td>
</tr>
<tr class="odd" style="left:86.0px;top:1505px;height:95px">
<td><code class="t" style="left:24.10px;top:32.00px;font-size:22.1px;line-height:30px;font-weight:700;font-family:'DejaVu Sans Mono', 'Liberation Mono', monospace;color:#4f4f4f;transform:scaleY(0.96);transform-origin:0 23.0px;">IsActiveMember</code></td>
<td><span class="t" style="left:411.18px;top:30.00px;font-size:26.0px;line-height:34px;letter-spacing:0.512px;color:#555;">Categorical</span></td>
<td><span class="t" style="left:695.19px;top:30.00px;font-size:26.0px;line-height:34px;letter-spacing:0.699px;color:#555;">8,000</span></td>
<td><span class="t" style="left:880.99px;top:30.00px;font-size:26.0px;line-height:34px;letter-spacing:-0.120px;color:#555;">0.03%</span></td>
<td><span class="t" style="left:1107.69px;top:30.00px;font-size:26.0px;line-height:34px;letter-spacing:-0.259px;color:#555;">0.00%</span></td>
<td><svg class="hist" style="left:1318.0px;top:24.0px" width="280" height="55" viewBox="2190 0 280 55" aria-hidden="true"><rect x="2210.0" y="0" width="108.0" height="55" fill="#ededed"/><rect x="2210.0" y="20.02" width="108.0" height="34.98" fill="#de257e"/><rect x="2345.0" y="0" width="107.0" height="55" fill="#ededed"/><rect x="2345.0" y="16.83" width="107.0" height="38.17" fill="#de257e"/></svg></td>
<td><svg class="ic" style="left:1640.0px;top:31.2px;width:32px;height:32px" viewBox="0 0 32 32" fill="none" stroke="#5d6878" stroke-width="2.05" stroke-linecap="round" aria-hidden="true"><circle cx="14.7" cy="15" r="9.85"/><path d="M21.8 22.1 28.6 28.9M10.2 15h9M14.7 10.5v9"/></svg></td>
</tr>
<tr class="even" style="left:86.0px;top:1600px;height:95px">
<td><code class="t" style="left:24.10px;top:32.00px;font-size:22.1px;line-height:30px;font-weight:700;font-family:'DejaVu Sans Mono', 'Liberation Mono', monospace;color:#4f4f4f;transform:scaleY(0.96);transform-origin:0 23.0px;">EstimatedSalary</code></td>
<td><span class="t" style="left:410.37px;top:30.00px;font-size:26.0px;line-height:34px;letter-spacing:0.458px;color:#555;">Numeric</span></td>
<td><span class="t" style="left:695.19px;top:30.00px;font-size:26.0px;line-height:34px;letter-spacing:0.699px;color:#555;">8,000</span></td>
<td><span class="t" style="left:880.17px;top:30.00px;font-size:26.0px;line-height:34px;letter-spacing:-0.120px;color:#555;">100.00%</span></td>
<td><span class="t" style="left:1107.69px;top:30.00px;font-size:26.0px;line-height:34px;letter-spacing:-0.259px;color:#555;">0.00%</span></td>
<td><svg class="hist" style="left:1318.0px;top:24.0px" width="280" height="55" viewBox="2190 0 280 55" aria-hidden="true"><rect x="2200.0" y="0" width="20.0" height="55" fill="#ededed"/><rect x="2200.0" y="11.16" width="20.0" height="43.84" fill="#de257e"/><rect x="2227.0" y="0" width="20.0" height="55" fill="#ededed"/><rect x="2227.0" y="12.16" width="20.0" height="42.84" fill="#de257e"/><rect x="2253.0" y="0" width="21.0" height="55" fill="#ededed"/><rect x="2253.0" y="11.16" width="21.0" height="43.84" fill="#de257e"/><rect x="2280.0" y="0" width="21.0" height="55" fill="#ededed"/><rect x="2280.0" y="9.19" width="21.0" height="45.81" fill="#de257e"/><rect x="2307.0" y="0" width="21.0" height="55" fill="#ededed"/><rect x="2307.0" y="11.16" width="21.0" height="43.84" fill="#de257e"/><rect x="2334.0" y="0" width="20.0" height="55" fill="#ededed"/><rect x="2334.0" y="10.18" width="20.0" height="44.82" fill="#de257e"/><rect x="2361.0" y="0" width="20.0" height="55" fill="#ededed"/><rect x="2361.0" y="11.16" width="20.0" height="43.84" fill="#de257e"/><rect x="2388.0" y="0" width="20.0" height="55" fill="#ededed"/><rect x="2388.0" y="12.16" width="20.0" height="42.84" fill="#de257e"/><rect x="2414.0" y="0" width="21.0" height="55" fill="#ededed"/><rect x="2414.0" y="10.18" width="21.0" height="44.82" fill="#de257e"/><rect x="2441.0" y="0" width="21.0" height="55" fill="#ededed"/><rect x="2441.0" y="12.16" width="21.0" height="42.84" fill="#de257e"/></svg></td>
<td><svg class="ic" style="left:1640.0px;top:31.2px;width:32px;height:32px" viewBox="0 0 32 32" fill="none" stroke="#5d6878" stroke-width="2.05" stroke-linecap="round" aria-hidden="true"><circle cx="14.7" cy="15" r="9.85"/><path d="M21.8 22.1 28.6 28.9M10.2 15h9M14.7 10.5v9"/></svg></td>
</tr>
<tr class="odd" style="left:86.0px;top:1695px;height:94px">
<td><code class="t" style="left:24.10px;top:31.00px;font-size:22.1px;line-height:30px;font-weight:700;font-family:'DejaVu Sans Mono', 'Liberation Mono', monospace;color:#4f4f4f;transform:scaleY(0.96);transform-origin:0 23.0px;">Exited</code></td>
<td><span class="t" style="left:411.18px;top:30.00px;font-size:26.0px;line-height:34px;letter-spacing:0.512px;color:#555;">Categorical</span></td>
<td><span class="t" style="left:695.19px;top:30.00px;font-size:26.0px;line-height:34px;letter-spacing:0.699px;color:#555;">8,000</span></td>
<td><span class="t" style="left:880.99px;top:30.00px;font-size:26.0px;line-height:34px;letter-spacing:-0.120px;color:#555;">0.03%</span></td>
<td><span class="t" style="left:1107.69px;top:30.00px;font-size:26.0px;line-height:34px;letter-spacing:-0.259px;color:#555;">0.00%</span></td>
<td><svg class="hist" style="left:1318.0px;top:23.0px" width="280" height="55" viewBox="2190 0 280 55" aria-hidden="true"><rect x="2210.0" y="0" width="108.0" height="55" fill="#ededed"/><rect x="2210.0" y="11.00" width="108.0" height="44.00" fill="#de257e"/><rect x="2345.0" y="0" width="107.0" height="55" fill="#ededed"/><rect x="2345.0" y="44.27" width="107.0" height="10.72" fill="#de257e"/></svg></td>
<td><svg class="ic" style="left:1640.0px;top:30.2px;width:32px;height:32px" viewBox="0 0 32 32" fill="none" stroke="#5d6878" stroke-width="2.05" stroke-linecap="round" aria-hidden="true"><circle cx="14.7" cy="15" r="9.85"/><path d="M21.8 22.1 28.6 28.9M10.2 15h9M14.7 10.5v9"/></svg></td>
</tr>
</tbody></table>
</section>
</main>
</body>
</html>
